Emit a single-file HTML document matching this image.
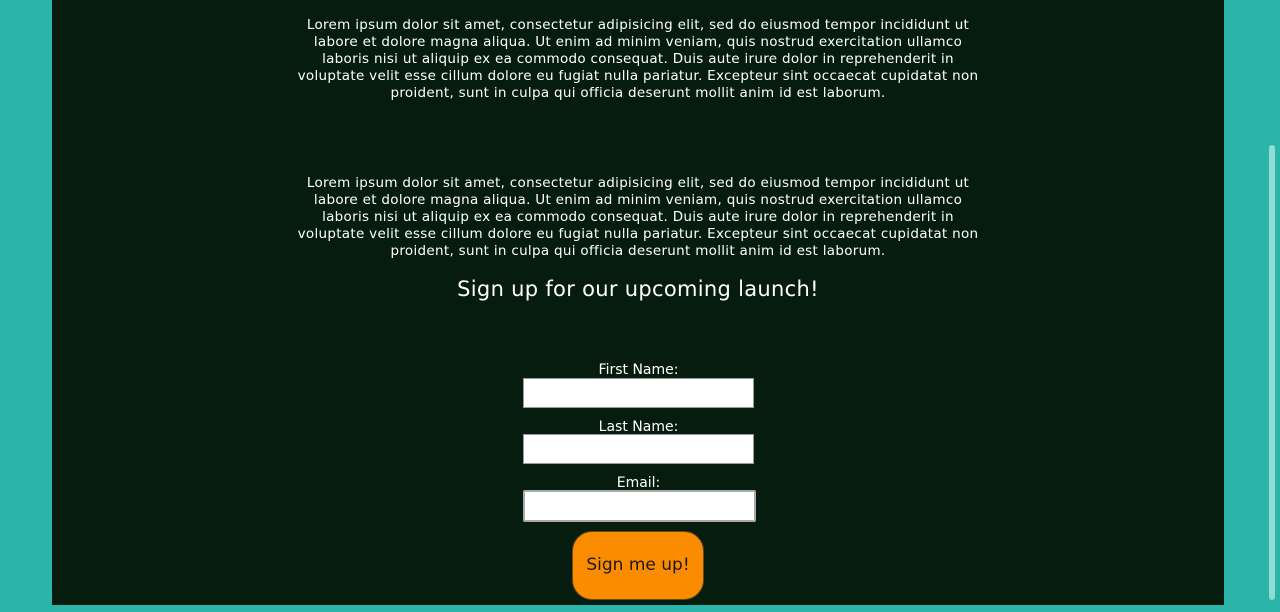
<!DOCTYPE html>
<html><head><style>
html,body{margin:0;padding:0;width:1280px;height:612px;overflow:hidden;background:#2bb5a9;font-family:"DejaVu Sans",sans-serif;}
#main{position:absolute;left:52px;top:0;width:1172px;height:605px;background:#061c0f;color:#fff;}
p{position:absolute;left:0;width:1172px;margin:0;text-align:center;font-size:13.5px;line-height:17px;white-space:nowrap;letter-spacing:0.3px;}
h2{position:absolute;left:0;width:1172px;top:277px;margin:0;text-align:center;font-weight:normal;font-size:21px;letter-spacing:0.3px;}
.lab{position:absolute;left:471px;width:231px;text-align:center;font-size:14px;}
.in{position:absolute;left:471px;width:229px;height:28px;background:#fff;border:1px solid #999;}
.btn{position:absolute;left:520px;top:531px;width:132px;height:69px;background:#fb8c00;border:1px solid #6a4a10;border-radius:20px;box-sizing:border-box;color:#1a1a1a;font-size:17px;text-align:center;line-height:67px;}
#sb{position:absolute;left:1269px;top:145px;width:6px;height:455px;background:#8fdcd6;border-radius:3px;}
</style></head><body>
<div id="main">
<p style="top:17px">Lorem ipsum dolor sit amet, consectetur adipisicing elit, sed do eiusmod tempor incididunt ut<br>labore et dolore magna aliqua. Ut enim ad minim veniam, quis nostrud exercitation ullamco<br>laboris nisi ut aliquip ex ea commodo consequat. Duis aute irure dolor in reprehenderit in<br>voluptate velit esse cillum dolore eu fugiat nulla pariatur. Excepteur sint occaecat cupidatat non<br>proident, sunt in culpa qui officia deserunt mollit anim id est laborum.</p>
<p style="top:175px">Lorem ipsum dolor sit amet, consectetur adipisicing elit, sed do eiusmod tempor incididunt ut<br>labore et dolore magna aliqua. Ut enim ad minim veniam, quis nostrud exercitation ullamco<br>laboris nisi ut aliquip ex ea commodo consequat. Duis aute irure dolor in reprehenderit in<br>voluptate velit esse cillum dolore eu fugiat nulla pariatur. Excepteur sint occaecat cupidatat non<br>proident, sunt in culpa qui officia deserunt mollit anim id est laborum.</p>
<h2>Sign up for our upcoming launch!</h2>
<div class="lab" style="top:362px">First Name:</div>
<div class="in" style="top:378px"></div>
<div class="lab" style="top:419px">Last Name:</div>
<div class="in" style="top:434px"></div>
<div class="lab" style="top:475px">Email:</div>
<div class="in" style="top:490px;border:2px solid #aaa;width:229px;height:28px;border-radius:2px"></div>
<div class="btn">Sign me up!</div>
</div>
<div id="sb"></div>
</body></html>
